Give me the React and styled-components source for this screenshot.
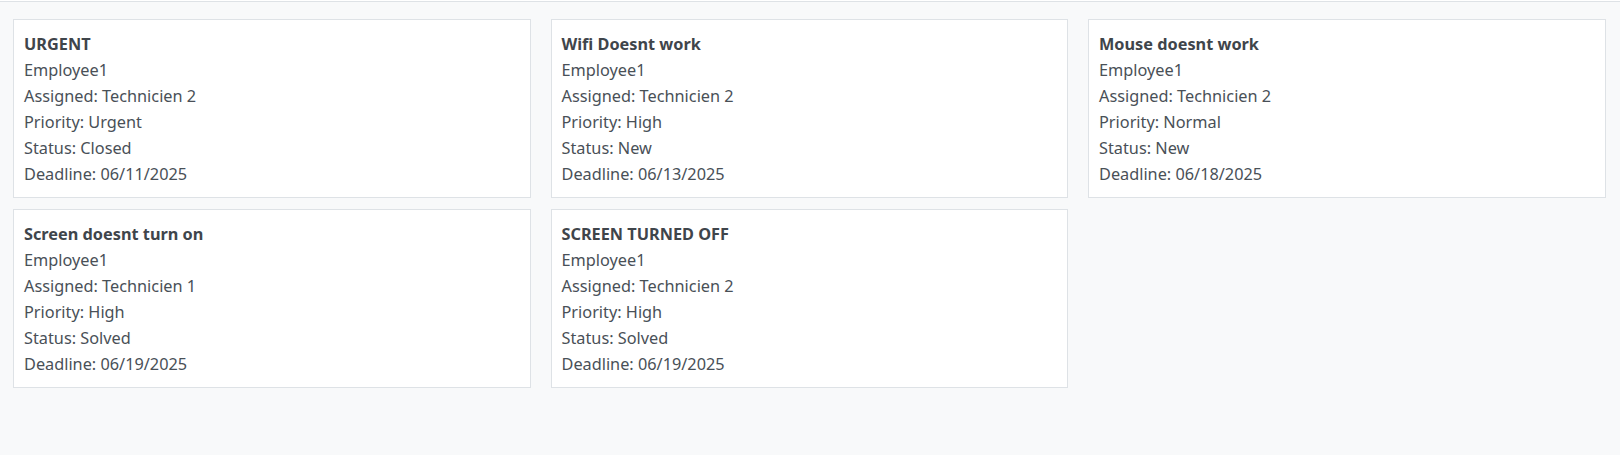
import React from "react";
import styled, { createGlobalStyle } from "styled-components";

const Global = createGlobalStyle`
  html, body { margin: 0; padding: 0; background: #f8f9fa; }
  body { font-family: "Noto Sans", "Open Sans", sans-serif; }
`;

const Page = styled.div`
  min-height: 455px;
  background: #f8f9fa;
  border-top: 1px solid #ffffff;
`;

const Board = styled.div`
  border-top: 1px solid #dee2e6;
  padding: 17px 14.5px 20px 13px;
  display: grid;
  grid-template-columns: repeat(3, 1fr);
  column-gap: 20px;
  row-gap: 11px;
`;

const Card = styled.div`
  background: #ffffff;
  border: 1px solid #dee2e6;
  padding: 11px 10px 10px 10px;
  color: #495057;
  font-size: 16.3px;
  line-height: 26px;
`;

const Title = styled.div`
  font-weight: 700;
  color: #3f454b;
`;

const Line = styled.div``;

const tickets = [
  { title: "URGENT", emp: "Employee1", tech: "Technicien 2", prio: "Urgent", status: "Closed", deadline: "06/11/2025" },
  { title: "Wifi Doesnt work", emp: "Employee1", tech: "Technicien 2", prio: "High", status: "New", deadline: "06/13/2025" },
  { title: "Mouse doesnt work", emp: "Employee1", tech: "Technicien 2", prio: "Normal", status: "New", deadline: "06/18/2025" },
  { title: "Screen doesnt turn on", emp: "Employee1", tech: "Technicien 1", prio: "High", status: "Solved", deadline: "06/19/2025" },
  { title: "SCREEN TURNED OFF", emp: "Employee1", tech: "Technicien 2", prio: "High", status: "Solved", deadline: "06/19/2025" },
];

export default function App() {
  return (
    <>
      <Global />
      <Page>
        <Board>
          {tickets.map((t, i) => (
            <Card key={i}>
              <Title>{t.title}</Title>
              <Line>{t.emp}</Line>
              <Line>Assigned: {t.tech}</Line>
              <Line>Priority: {t.prio}</Line>
              <Line>Status: {t.status}</Line>
              <Line>Deadline: {t.deadline}</Line>
            </Card>
          ))}
        </Board>
      </Page>
    </>
  );
}
